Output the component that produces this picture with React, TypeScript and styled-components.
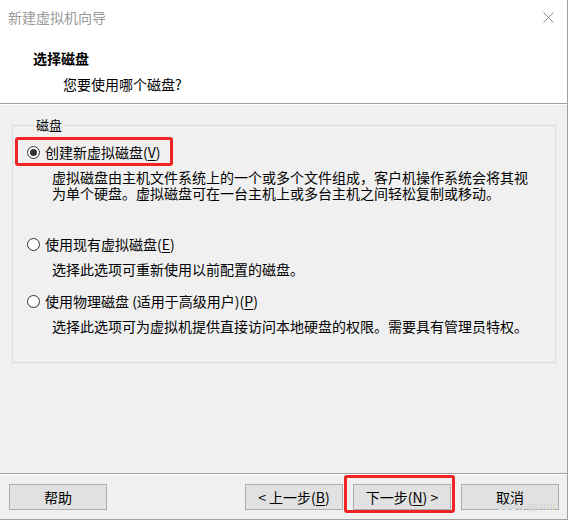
import React from "react";
import styled, { createGlobalStyle } from "styled-components";

const GlobalStyle = createGlobalStyle`
  html, body {
    margin: 0;
    padding: 0;
    background: #ffffff;
  }
  body {
    font-family: "Noto Sans CJK SC", "Liberation Sans", sans-serif;
    font-size: 14px;
    color: #000;
  }
`;

const Window = styled.div`
  position: relative;
  width: 567px;
  height: 519px;
  display: flex;
  flex-direction: column;
  background: #f0f0f0;
  border-right: 1px solid #a0a0a0;
  border-bottom: 1px solid #a0a0a0;
`;

const Header = styled.div`
  height: 103px;
  background: #ffffff;
  border-bottom: 1px solid #a0a0a0;
  box-shadow: 0 1px 0 #ffffff;
`;

const TitleBar = styled.div`
  height: 34px;
  display: flex;
  align-items: center;
  justify-content: space-between;
  padding: 0 13px 0 8px;
`;

const Title = styled.span`
  color: #9a9a9a;
  font-size: 14px;
  line-height: 20px;
`;

const CloseIcon = styled.svg`
  width: 11px;
  height: 11px;
  display: block;
`;

const Heading = styled.div`
  margin: 14px 0 0 33px;
  font-size: 14px;
  font-weight: bold;
  line-height: 20px;
`;

const SubHeading = styled.div`
  margin: 6px 0 0 63px;
  font-size: 14px;
  line-height: 20px;
`;

const Body = styled.div`
  flex: 1;
  padding: 13px 11px 0 12px;
`;

const GroupBox = styled.fieldset`
  margin: 0;
  padding: 9px 0 28px 14px;
  border: 1px solid #dcdcdc;
  min-width: 0;
`;

const Legend = styled.legend`
  margin-left: 7px;
  padding: 0 2px;
  font-size: 13px;
  line-height: 16px;
`;

const Option = styled.label<{ $gap: number }>`
  display: flex;
  align-items: center;
  height: 20px;
  margin-top: ${(p) => p.$gap}px;
  font-size: 14px;
  line-height: 20px;
`;

const Radio = styled.span<{ $checked?: boolean }>`
  box-sizing: border-box;
  width: 13px;
  height: 13px;
  margin-right: 5px;
  border: 1px solid #333333;
  border-radius: 50%;
  background: #ffffff;
  display: flex;
  align-items: center;
  justify-content: center;

  &::after {
    content: "";
    width: 7px;
    height: 7px;
    border-radius: 50%;
    background: ${(p) => (p.$checked ? "#333333" : "transparent")};
  }
`;

const Key = styled.u`
  text-underline-offset: 2px;
`;

const Description = styled.div`
  margin: 7px 0 0 25px;
  font-size: 14px;
  line-height: 16px;
`;

const Footer = styled.div`
  display: flex;
  align-items: center;
  padding: 10px 8px 9px 9px;
  border-top: 1px solid #a0a0a0;
  box-shadow: inset 0 1px 0 #ffffff;
`;

const Spacer = styled.div`
  flex: 1;
`;

const Button = styled.button`
  box-sizing: border-box;
  width: 98px;
  height: 26px;
  margin-left: ${(p: { $ml?: number }) => p.$ml ?? 0}px;
  padding: 0;
  background: #e1e1e1;
  border: 1px solid #adadad;
  font-family: "Noto Sans CJK SC", "Liberation Sans", sans-serif;
  font-size: 14px;
  line-height: 22px;
  color: #000;
`;

const Mark = styled.div<{ $x: number; $y: number; $w: number; $h: number }>`
  position: absolute;
  left: ${(p) => p.$x}px;
  top: ${(p) => p.$y}px;
  width: ${(p) => p.$w}px;
  height: ${(p) => p.$h}px;
  box-sizing: border-box;
  border: 3px solid #f02424;
  border-radius: 3px;
  pointer-events: none;
`;

const Watermark = styled.span`
  position: absolute;
  right: 13px;
  bottom: 7px;
  font-family: "Liberation Sans", sans-serif;
  font-size: 9px;
  line-height: 9px;
  letter-spacing: 0.5px;
  color: #ffffff;
  text-shadow: 0 0 1px rgba(0, 0, 0, 0.45);
`;

export default function App() {
  return (
    <>
      <GlobalStyle />
      <Window>
        <Header>
          <TitleBar>
            <Title>新建虚拟机向导</Title>
            <CloseIcon viewBox="0 0 11 11">
              <path d="M0.5 0.5 L10.5 10.5 M10.5 0.5 L0.5 10.5" stroke="#8c8c8c" strokeWidth="1" />
            </CloseIcon>
          </TitleBar>
          <Heading>选择磁盘</Heading>
          <SubHeading>您要使用哪个磁盘?</SubHeading>
        </Header>

        <Body>
          <GroupBox>
            <Legend>磁盘</Legend>
            <Option $gap={0}>
              <Radio $checked />
              创建新虚拟磁盘(<Key>V</Key>)
            </Option>
            <Description>
              虚拟磁盘由主机文件系统上的一个或多个文件组成，客户机操作系统会将其视
              <br />
              为单个硬盘。虚拟磁盘可在一台主机上或多台主机之间轻松复制或移动。
            </Description>
            <Option $gap={33}>
              <Radio />
              使用现有虚拟磁盘(<Key>E</Key>)
            </Option>
            <Description>选择此选项可重新使用以前配置的磁盘。</Description>
            <Option $gap={14}>
              <Radio />
              使用物理磁盘 (适用于高级用户)(<Key>P</Key>)
            </Option>
            <Description>选择此选项可为虚拟机提供直接访问本地硬盘的权限。需要具有管理员特权。</Description>
          </GroupBox>
        </Body>

        <Footer>
          <Button>帮助</Button>
          <Spacer />
          <Button>
            &lt; 上一步(<Key>B</Key>)
          </Button>
          <Button $ml={10}>
            下一步(<Key>N</Key>) &gt;
          </Button>
          <Button $ml={10}>取消</Button>
        </Footer>

        <Mark $x={15} $y={137} $w={158} $h={29} />
        <Mark $x={344} $y={475} $w={111} $h={38} />
        <Watermark>CSDN @HKI</Watermark>
      </Window>
    </>
  );
}
